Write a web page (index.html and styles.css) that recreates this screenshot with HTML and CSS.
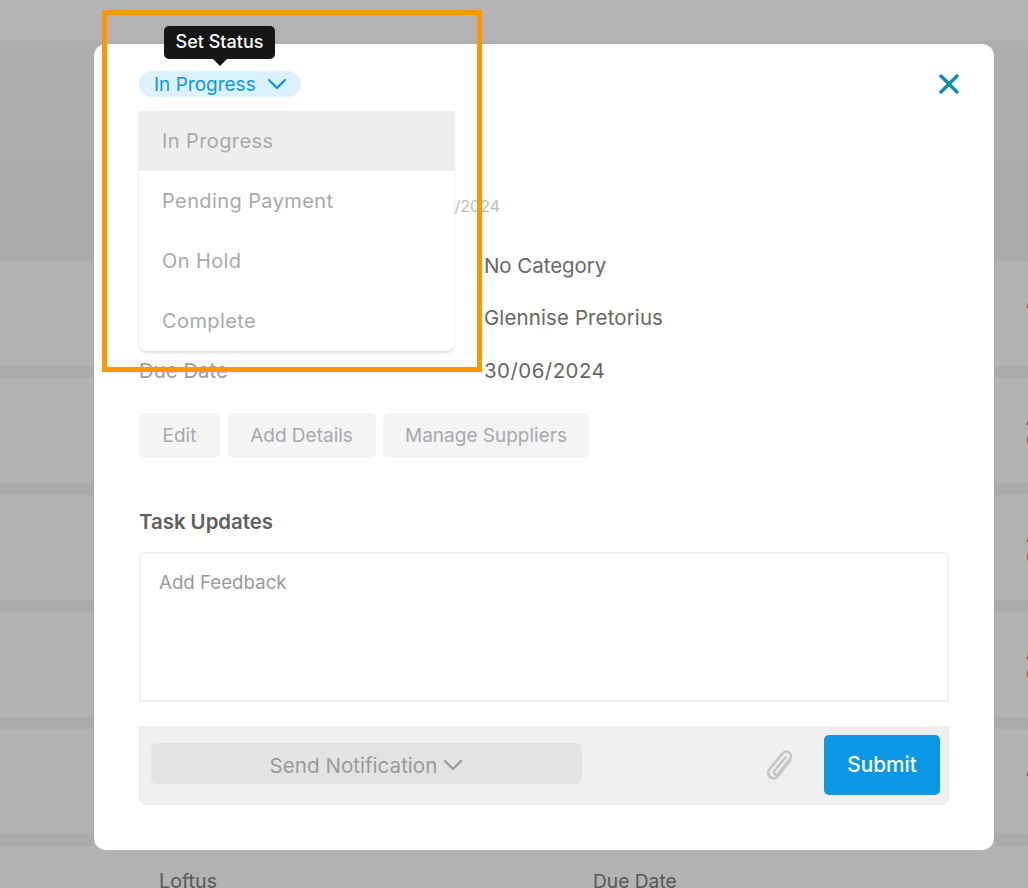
FILE: index.html
```html
<!DOCTYPE html>
<html lang="en">
<head>
<meta charset="utf-8">
<title>Task</title>
<link rel="stylesheet" href="styles.css">
</head>
<body>
<div class="page">
  <div class="topbar"></div>
  <div class="subbar"></div>
  <div class="thead"></div>
  <div class="row"><span class="edge">A</span></div>
  <div class="row"><span class="edge">A<br>C</span></div>
  <div class="row"><span class="edge">A<br>C</span></div>
  <div class="row"><span class="edge">A<br>C</span></div>
  <div class="row"><span class="edge">A</span></div>
  <div class="row last"><span class="cell-a">Loftus</span><span class="cell-b">Due Date</span></div>
</div>

<section class="modal">
  <svg class="close" viewBox="0 0 20 20" width="20" height="20" aria-label="Close"><path d="M2 2 18 18M18 2 2 18"/></svg>
  <div class="status-pill">In Progress
    <svg viewBox="0 0 20 12" width="20" height="12"><path d="M2 2l8 8 8-8"/></svg>
  </div>
  <div class="created">Created on 01/07/2024</div>
  <dl class="facts">
    <div class="fact"><dt>Category</dt><dd>No Category</dd></div>
    <div class="fact name"><dt>Assigned To</dt><dd>Glennise Pretorius</dd></div>
    <div class="fact date"><dt>Due Date</dt><dd>30/06/2024</dd></div>
  </dl>
  <div class="actions">
    <button class="ghost">Edit</button>
    <button class="ghost">Add Details</button>
    <button class="ghost">Manage Suppliers</button>
  </div>
  <h2 class="updates">Task Updates</h2>
  <div class="feedback">Add Feedback</div>
  <div class="composer">
    <div class="notify">Send Notification
      <svg viewBox="0 0 20 12" width="20" height="12"><path d="M2 2l8 8 8-8"/></svg>
    </div>
    <svg class="clip" viewBox="0 0 28 32" width="28" height="32"><path d="M24 10.500 11.500 27a5.600 5.600 0 0 1-8.500-7L16.500 3.500a4.600 4.600 0 0 1 7.500 5.400L12 24a2.400 2.400 0 0 1-3.800-2.900L19.500 7.500"/></svg>
    <button class="submit">Submit</button>
  </div>
</section>

<ul class="menu">
  <li class="active">In Progress</li>
  <li>Pending Payment</li>
  <li>On Hold</li>
  <li>Complete</li>
</ul>
<div class="tooltip">Set Status</div>
<div class="annotation"></div>
</body>
</html>
```
FILE: styles.css
```css
* { box-sizing: border-box; }
html, body { margin: 0; height: 100%; }
body {
  width: 1028px;
  height: 888px;
  overflow: hidden;
  position: relative;
  background: #b2b2b2;
  font-family: Inter, "Liberation Sans", sans-serif;
}
.page { display: flex; flex-direction: column; }
.topbar { height: 41px; background: #b3b3b3; }
.subbar { height: 120px; background: #aeaeae; }
.thead { height: 100px; background: #a9aaac; }
.row {
  position: relative;
  height: 105px;
  margin-bottom: 12px;
  background: #b2b2b2;
  box-shadow: 0 12px 0 #aaabad;
}
.row.last { margin: 0; box-shadow: none; height: 60px; }
.edge {
  position: absolute;
  left: 1026px;
  top: 30px;
  font-size: 18px;
  line-height: 22px;
  color: #5c5c5c;
  opacity: .99;
}
.cell-a, .cell-b {
  position: absolute;
  top: 23px;
  color: #585858;
}
.cell-a { left: 159px; font-size: 19.700px; }
.cell-b { left: 593px; font-size: 19.200px; }

.modal {
  position: absolute;
  left: 94px;
  top: 44px;
  width: 900px;
  height: 806px;
  padding: 27px 45px 0;
  background: #fff;
  border-radius: 12px;
  display: flex;
  flex-direction: column;
}
.close {
  position: absolute;
  left: 845px;
  top: 30px;
  fill: none;
  stroke: #0d8fa8;
  stroke-width: 3.400;
  stroke-linecap: round;
}
.status-pill {
  width: 162px;
  height: 26px;
  padding-left: 15px;
  display: flex;
  align-items: center;
  gap: 11px;
  border-radius: 13px;
  background: #dcf1ff;
  color: #0c97e6;
  font-size: 19px;
}
.status-pill svg, .notify svg {
  fill: none;
  stroke: currentColor;
  stroke-width: 2.300;
  stroke-linecap: round;
  stroke-linejoin: round;
}
.created {
  width: 361px;
  margin-top: 99px;
  height: 20px;
  line-height: 20px;
  text-align: right;
  color: #bdbdbd;
  font-size: 16px;
}
.facts { margin: 36px 0 0; display: flex; flex-direction: column; gap: 26.500px; }
.fact { display: flex; height: 26px; align-items: center; font-size: 20.400px; }
.fact dt { width: 345px; color: #9c9c9c; }
.fact dd { margin: 0; color: #666; }
.fact.name dd { letter-spacing: .16px; }
.fact.date dd { letter-spacing: .5px; }
.actions {
  margin-top: 30px;
  display: grid;
  grid-template-columns: 81px 148px 206px;
  column-gap: 7.500px;
}
.ghost {
  height: 45px;
  padding: 0;
  border: 0;
  border-radius: 6px;
  background: #f4f4f4;
  color: #a8a8ae;
  font: inherit;
  font-size: 19px;
}
.updates {
  margin: 51px 0 0;
  height: 26px;
  line-height: 26px;
  font-size: 20.400px;
  font-weight: 600;
  color: #5f5f5f;
}
.feedback {
  margin-top: 16.500px;
  height: 150px;
  padding: 17px 18px;
  border: 2px solid #f0f0f0;
  border-radius: 6px 6px 0 0;
  color: #999;
  font-size: 18.700px;
}
.composer {
  margin-top: 24px;
  height: 79px;
  padding: 9px 9px 0 12px;
  display: flex;
  background: #efefef;
  border-radius: 0 0 6px 6px;
}
.notify {
  width: 431px;
  height: 41px;
  margin-top: 8px;
  padding-top: 4px;
  display: flex;
  align-items: center;
  justify-content: center;
  gap: 6px;
  border-radius: 6px;
  background: #e3e3e3;
  color: #9a9a9a;
  font-size: 20.600px;
}
.clip {
  margin: 15px 30px 0 184px;
  fill: none;
  stroke: #c4c4c4;
  stroke-width: 2.400;
  stroke-linecap: round;
}
.submit {
  width: 116px;
  height: 60px;
  border: 0;
  border-radius: 5px;
  background: #0a97e6;
  color: #fff;
  font: inherit;
  font-size: 20.800px;
  font-weight: 500;
}

.menu {
  position: absolute;
  left: 139px;
  top: 111px;
  width: 315px;
  margin: 0;
  padding: 0;
  list-style: none;
  background: #fff;
  border-radius: 0 0 8px 8px;
  box-shadow: 0 2px 3px rgba(0,0,0,.14);
}
.menu li {
  height: 60px;
  padding-left: 23px;
  line-height: 60px;
  color: #a9a9a9;
  font-size: 20px;
  letter-spacing: .4px;
}
.menu li.active { background: #eee; }
.tooltip {
  position: absolute;
  left: 164px;
  top: 26px;
  width: 111px;
  height: 33px;
  line-height: 32px;
  text-align: center;
  border-radius: 5px;
  background: #161616;
  color: #fff;
  font-size: 18px;
  font-weight: 500;
}
.tooltip::after {
  content: "";
  position: absolute;
  left: 49px;
  top: 33px;
  border: 7px solid transparent;
  border-top-color: #161616;
  border-bottom: 0;
}
.annotation {
  position: absolute;
  left: 102px;
  top: 10px;
  width: 380px;
  height: 362px;
  border: 5px solid #ff9800;
}
```
